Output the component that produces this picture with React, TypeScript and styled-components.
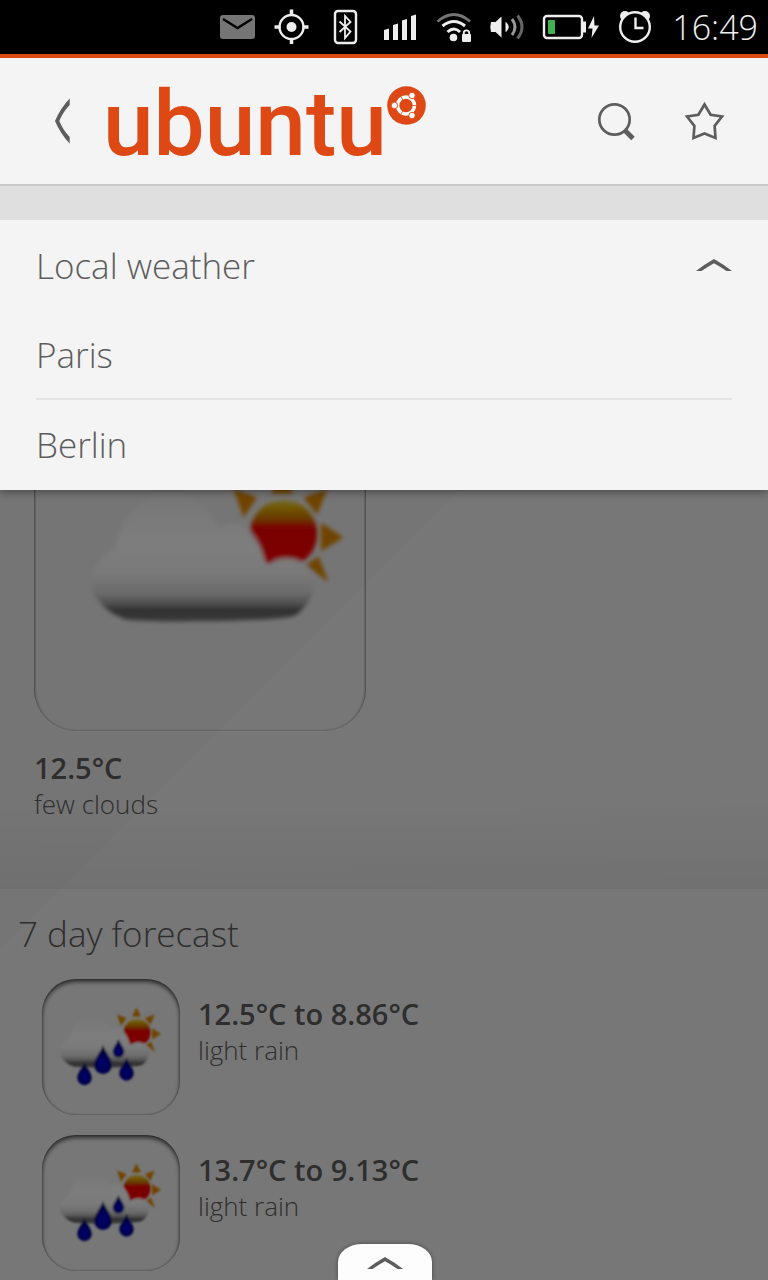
import React, { useState } from "react";
import styled, { createGlobalStyle } from "styled-components";

const GlobalStyle = createGlobalStyle`
  *, *::before, *::after { box-sizing: border-box; }
  body {
    margin: 0;
    background: #f4f4f4;
    color: #5d5d5d;
    font-family: "Open Sans", "Noto Sans", sans-serif;
    font-weight: 300;
  }
  h1, h2, p, ul { margin: 0; padding: 0; font-weight: inherit; }
  ul { list-style: none; }
  button {
    font: inherit;
    color: inherit;
    background: none;
    border: 0;
    padding: 0;
    cursor: pointer;
  }
  svg { display: block; flex: none; }
`;

const Screen = styled.div`
  display: flex;
  flex-direction: column;
  height: 100vh;
  overflow: hidden;
`;

const StatusBar = styled.div`
  display: flex;
  align-items: center;
  justify-content: flex-end;
  flex: none;
  height: 58px;
  padding-right: 10px;
  background: #000;
  border-bottom: 4px solid #dd4814;
`;

const Indicators = styled.div`
  display: flex;
  align-items: center;
  gap: 18px;
`;

const Clock = styled.time`
  margin-left: 20px;
  color: #eee;
  font-size: 34px;
  line-height: 54px;
`;

const Header = styled.header`
  display: flex;
  align-items: center;
  flex: none;
  height: 128px;
  padding: 0 42px 0 52px;
  background: #f4f4f4;
  border-bottom: 2px solid #c9c9c9;
`;

const IconButton = styled.button`
  display: flex;
  align-items: center;
  justify-content: center;
  height: 48px;
`;

const Brand = styled.h1`
  display: flex;
  align-items: flex-start;
  margin: 0 auto 0 31px;
  padding-top: 6px;
  color: #dd4814;
`;

const Wordmark = styled.span`
  font-family: Roboto, sans-serif;
  font-size: 91px;
  font-weight: 500;
  line-height: 76px;
`;

const Actions = styled.div`
  display: flex;
  gap: 47px;
`;

const Strip = styled.div`
  flex: none;
  height: 34px;
  background: #dfdfdf;
`;

const Main = styled.main`
  position: relative;
  flex: 1;
  min-height: 0;
  overflow: hidden;
  background: linear-gradient(135deg, #eaeaea 0, #ebebeb 516px, #efefef 516px, #eeeeee 100%);
`;

const Scrim = styled.div`
  position: absolute;
  inset: 0;
  background: rgba(0, 0, 0, 0.5);
`;

const Departments = styled.nav`
  position: absolute;
  top: 0;
  left: 0;
  right: 0;
  padding: 0 36px;
  background: #f4f4f4;
  box-shadow: 0 2px 8px rgba(0, 0, 0, 0.4);
  font-size: 35px;
`;

const DepartmentToggle = styled.button`
  display: flex;
  align-items: center;
  justify-content: space-between;
  width: 100%;
  height: 90px;
  text-align: left;
`;

const DepartmentItem = styled.li`
  display: flex;
  height: 90px;
  border-bottom: 2px solid #e4e4e4;
  &:last-child { border-bottom: 0; }
`;

const DepartmentLink = styled.a`
  flex: 1;
  color: inherit;
  text-decoration: none;
  line-height: 90px;
`;

const CurrentSection = styled.section`
  height: 669px;
  padding: 188px 34px 0;
  background: linear-gradient(to bottom, transparent 580px, rgba(0, 0, 0, 0.05));
`;

const ForecastSection = styled.section`
  padding: 20px 18px 0;
`;

const SectionTitle = styled.h2`
  font-size: 35px;
  line-height: 50px;
`;

const Tile = styled.div<{ $large?: boolean }>`
  display: flex;
  align-items: center;
  justify-content: center;
  flex: none;
  width: ${(p) => (p.$large ? 332 : 138)}px;
  height: ${(p) => (p.$large ? 323 : 136)}px;
  padding-left: ${(p) => (p.$large ? 36 : 0)}px;
  border-radius: ${(p) => (p.$large ? 42 : 34)}px;
  box-shadow: ${(p) =>
    p.$large
      ? "inset 0 1px 3px rgba(0, 0, 0, 0.9), 0 1px 0 #f4f4f4"
      : "inset 0 3px 4px rgba(0, 0, 0, 0.6), inset 0 0 2px rgba(0, 0, 0, 0.5), 0 1px 0 #f4f4f4"};
`;

const ForecastList = styled.ul`
  display: flex;
  flex-direction: column;
  gap: 20px;
  padding: 20px 24px 0;
`;

const ForecastRow = styled.li`
  display: flex;
  gap: 18px;
`;

const Reading = styled.div<{ $below?: boolean }>`
  padding-top: ${(p) => (p.$below ? 19 : 17)}px;
`;

const Temperature = styled.p`
  font-size: 29px;
  font-weight: 600;
  line-height: 36px;
`;

const Condition = styled.p`
  font-size: 26px;
  line-height: 36px;
`;

const BottomTab = styled.button`
  position: absolute;
  bottom: 0;
  left: 50%;
  width: 94px;
  height: 36px;
  margin-left: -46px;
  display: flex;
  justify-content: center;
  padding-top: 12px;
  background: #fdfdfd;
  border-radius: 24px 24px 0 0 / 18px 18px 0 0;
  box-shadow: 0 0 4px rgba(0, 0, 0, 0.4);
`;

const StatusIcons = () => (
  <svg width="380" height="54" viewBox="220 0 380 54" role="img" aria-label="Status indicators" fill="none">
    <rect x="220" y="15" width="35" height="24" rx="3" fill="#757575" />
    <path d="M223 19l14.500 9 14.500-9" stroke="#000" strokeWidth="2.400" />
    <g stroke="#eee" strokeWidth="2.400">
      <circle cx="291.500" cy="27" r="12" />
      <path d="M291.500 9.500v6M291.500 38v6M274.500 27h6M302.500 27h6" strokeWidth="3.500" />
    </g>
    <circle cx="291.500" cy="27" r="5" fill="#eee" />
    <rect x="335" y="11" width="21" height="32" rx="3" stroke="#eee" strokeWidth="2.400" />
    <path d="M339.500 21.500l11 10-5.500 6.500V16l5.500 6-11 10" stroke="#eee" strokeWidth="1.800" />
    <path d="M384 30l5-1.500V40h-5zM393 25l5-1.500V40h-5zM402 20.500l5-1.500v21h-5zM411 16l5-1.500V40h-5z" fill="#eee" />
    <path d="M437.500 21.500Q454 7.500 470 21.500" stroke="#757575" strokeWidth="2.800" />
    <path d="M442.500 26Q454 17 465 26" stroke="#eee" strokeWidth="3" />
    <path d="M447.500 32Q454 26 460 32" stroke="#eee" strokeWidth="3" />
    <circle cx="453.500" cy="37.500" r="3.800" fill="#eee" />
    <rect x="462" y="34" width="9" height="8" rx="1" fill="#eee" />
    <path d="M463.800 35v-2a2.700 2.700 0 0 1 5.400 0v2" stroke="#eee" strokeWidth="1.800" />
    <path d="M491 22h4.500l6-5.500v21l-6-5.500H491q-1.500-5 0-10z" fill="#eee" />
    <path d="M506 22.500q4.500 4.500 0 9z" fill="#eee" stroke="#eee" />
    <path d="M512 19q6 8 0 16" stroke="#999" strokeWidth="3" />
    <path d="M517.500 15.500q9 11.500 0 23" stroke="#666" strokeWidth="3" />
    <rect x="544" y="16" width="38" height="22" rx="3" stroke="#eee" strokeWidth="2.400" />
    <path d="M583 21.500h3v11h-3z" fill="#eee" />
    <rect x="548" y="20" width="7" height="14" rx="1" fill="#3fb24f" />
    <path d="M594 16l-6 12.500h4.500l-1 9.500 7.500-12.500h-4.500z" fill="#eee" />
  </svg>
);

const AlarmIcon = () => (
  <svg width="34" height="54" viewBox="1 0 34 54" role="img" aria-label="Alarm set" fill="none">
    <circle cx="8" cy="16" r="5" fill="#eee" />
    <circle cx="28" cy="16" r="5" fill="#eee" />
    <circle cx="18" cy="27" r="14.800" fill="#000" stroke="#eee" strokeWidth="2.400" />
    <path d="M18.500 17.500V28H26.500" stroke="#eee" strokeWidth="2.400" />
  </svg>
);

const BackIcon = () => (
  <svg width="20" height="48" viewBox="0 0 20 48" aria-hidden="true">
    <path d="M17.700 1.500Q8.500 11 3 24Q8.500 37 17.700 46.500V40Q11 33 7.300 24Q11 15 17.700 8z" fill="#5d5d5d" />
  </svg>
);

const FriendsLogo = () => (
  <svg width="39" height="39" viewBox="0 0 39 39" aria-hidden="true" fill="none">
    <circle cx="19.500" cy="19.500" r="19.300" fill="#dd4814" />
    <circle cx="19" cy="19.500" r="8.500" stroke="#fff" strokeWidth="3.600" />
    <path
      d="M19 19.500L31 19.500M19 19.500L13 9.100M19 19.500L13 29.900"
      stroke="#dd4814"
      strokeWidth="0.800"
    />
    <g fill="#fff" stroke="#dd4814" strokeWidth="0.900">
      <circle cx="7.500" cy="19.500" r="3.200" />
      <circle cx="25" cy="9.500" r="3.200" />
      <circle cx="25" cy="29.500" r="3.200" />
    </g>
  </svg>
);

const SearchIcon = () => (
  <svg width="40" height="40" viewBox="0 0 40 40" aria-hidden="true" fill="none" stroke="#5d5d5d">
    <circle cx="17.500" cy="18.500" r="15.200" strokeWidth="2.700" />
    <path d="M27.500 29L36 37.500" strokeWidth="5" />
  </svg>
);

const StarIcon = () => (
  <svg width="42" height="42" viewBox="0 0 42 42" aria-hidden="true" fill="none">
    <path
      d="M20.500 4.500L26.600 14.800L38 16.500L30.600 26L31.500 38L20.500 33.500L9.500 38L10.400 26L3 16.500L14.400 14.800Z"
      stroke="#5d5d5d"
      strokeWidth="2.700"
    />
  </svg>
);

const ChevronUp = () => (
  <svg width="36" height="14" viewBox="0 0 36 14" aria-hidden="true">
    <path d="M0 13Q9 6 18 1Q27 6 36 13H30.500Q24 8.500 18 5.200Q12 8.500 5.500 13z" fill="#5d5d5d" />
  </svg>
);

const Drop = ({ x, y, s }: { x: number; y: number; s: number }) => (
  <path
    transform={`translate(${x} ${y}) scale(${s})`}
    d="M0-15C2-8 9-2 9 5A9 9 0 0 1-9 5C-9-2-2-8 0-15Z"
    fill="url(#drop)"
  />
);

const WeatherIcon = ({ rain, large }: { rain?: boolean; large?: boolean }) => (
  <svg
    width={large ? 265 : 106}
    height={large ? 200 : 80}
    viewBox="16 28 106 80"
    role="img"
    aria-label={rain ? "Light rain" : "Few clouds"}
  >
    <defs>
      <linearGradient id="cloud" x1="0" y1="38" x2="0" y2="88" gradientUnits="userSpaceOnUse">
        <stop offset="0" stopColor="#eeeeee" />
        <stop offset="0.400" stopColor="#fcfcfc" />
        <stop offset="0.620" stopColor="#f4f4f4" />
        <stop offset="0.780" stopColor="#d8d8d8" />
        <stop offset="0.860" stopColor="#a8a8a8" />
        <stop offset="0.920" stopColor="#606060" />
        <stop offset="1" stopColor="#747474" />
      </linearGradient>
      <linearGradient id="sun" x1="0" y1="39" x2="0" y2="66" gradientUnits="userSpaceOnUse">
        <stop offset="0" stopColor="#f0e070" />
        <stop offset="0.150" stopColor="#e0b000" />
        <stop offset="0.320" stopColor="#d07000" />
        <stop offset="0.440" stopColor="#f40000" />
        <stop offset="1" stopColor="#fa0000" />
      </linearGradient>
      <radialGradient id="drop" cx="0.500" cy="0.650" r="0.500">
        <stop offset="0" stopColor="#0000ec" />
        <stop offset="1" stopColor="#00006c" />
      </radialGradient>
      <filter id="soft" x="-10%" y="-10%" width="120%" height="120%">
        <feGaussianBlur stdDeviation="0.800" />
      </filter>
    </defs>
    <g filter="url(#soft)">
      <g fill="#e08800">
        <path d="M90 37.500L94.500 28.500L99 37.500Z" />
        <path d="M75 35.500L84.500 39L79 47Z" />
        <path d="M112.500 35.500L103 39L108.500 46Z" />
        <path d="M110 49L119 55L110 60.500Z" />
        <path d="M104 66L109 62.500L113 73Z" />
      </g>
      <circle cx="95" cy="53.500" r="13.500" fill="url(#sun)" />
      <path
        d="M33 88C25 86 18 79 18 73C18 67 22 63 28 59C30 46 38 38 49 38C59 38 65 43 69 51C74 48 79 49 82 53C85 57 87 61 88 67C92 62 101 62 104 67C109 72 108 80 100 86C96 89 37 89 33 88Z"
        fill="url(#cloud)"
      />
      {rain && (
        <>
          <Drop x={61} y={81} s={1} />
          <Drop x={76.5} y={69.5} s={0.65} />
          <Drop x={42.5} y={95} s={0.8} />
          <Drop x={84.5} y={90.5} s={0.8} />
        </>
      )}
    </g>
  </svg>
);

const cities = ["Paris", "Berlin"];

const forecast = [
  { range: "12.5°C to 8.86°C", condition: "light rain" },
  { range: "13.7°C to 9.13°C", condition: "light rain" },
];

export default function App() {
  const [open, setOpen] = useState(true);

  return (
    <Screen>
      <GlobalStyle />
      <StatusBar>
        <Indicators>
          <StatusIcons />
          <AlarmIcon />
        </Indicators>
        <Clock>16:49</Clock>
      </StatusBar>
      <Header>
        <IconButton aria-label="Back">
          <BackIcon />
        </IconButton>
        <Brand>
          <Wordmark>ubuntu</Wordmark>
          <FriendsLogo />
        </Brand>
        <Actions>
          <IconButton aria-label="Search">
            <SearchIcon />
          </IconButton>
          <IconButton aria-label="Add to favourites">
            <StarIcon />
          </IconButton>
        </Actions>
      </Header>
      <Strip />
      <Main>
        <CurrentSection>
          <Tile $large>
            <WeatherIcon large />
          </Tile>
          <Reading $below>
            <Temperature>12.5°C</Temperature>
            <Condition>few clouds</Condition>
          </Reading>
        </CurrentSection>
        <ForecastSection>
          <SectionTitle>7 day forecast</SectionTitle>
          <ForecastList>
            {forecast.map((day) => (
              <ForecastRow key={day.range}>
                <Tile>
                  <WeatherIcon rain />
                </Tile>
                <Reading>
                  <Temperature>{day.range}</Temperature>
                  <Condition>{day.condition}</Condition>
                </Reading>
              </ForecastRow>
            ))}
          </ForecastList>
        </ForecastSection>
        <Scrim />
        <Departments aria-label="Locations">
          <DepartmentToggle aria-expanded={open} onClick={() => setOpen(!open)}>
            Local weather
            <ChevronUp />
          </DepartmentToggle>
          {open && (
            <ul>
              {cities.map((city) => (
                <DepartmentItem key={city}>
                  <DepartmentLink href={`#${city.toLowerCase()}`}>{city}</DepartmentLink>
                </DepartmentItem>
              ))}
            </ul>
          )}
        </Departments>
        <BottomTab aria-label="Open scope list">
          <ChevronUp />
        </BottomTab>
      </Main>
    </Screen>
  );
}
